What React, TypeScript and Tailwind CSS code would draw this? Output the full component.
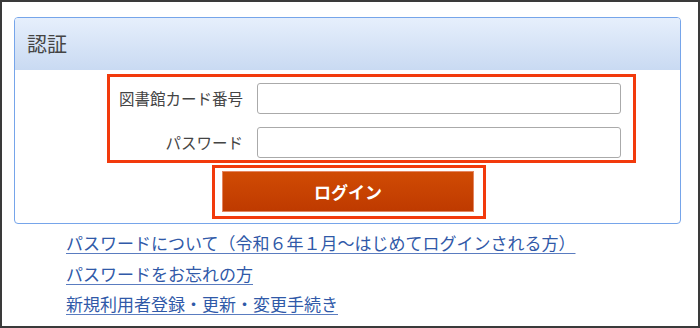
export default function App() {
  const links = [
    'パスワードについて（令和６年１月～はじめてログインされる方）',
    'パスワードをお忘れの方',
    '新規利用者登録・更新・変更手続き',
  ];

  return (
    <div
      className="w-[700px] h-[328px] border-2 border-[#3a3a3a] bg-white pt-[15px] pl-[12px] box-border overflow-hidden"
      style={{ fontFamily: '"Noto Sans CJK JP", "Noto Sans", sans-serif' }}
    >
      {/* Auth panel */}
      <section className="w-[667px] border border-[#76a5ea] rounded-[4px] overflow-hidden">
        <header className="h-[52px] flex items-center pl-[12px] bg-gradient-to-b from-[#e6effc] to-[#c9daf2]">
          <h1 className="text-[20px] text-[#444] leading-none">認証</h1>
        </header>

        <div className="pt-[4px] pb-[4px]">
          {/* Inputs */}
          <div className="ml-[92px] w-[529px] border-[3px] border-[#f23a0c] pt-[6px] pb-[2px] pl-[8px] pr-[12px]">
            <div className="grid grid-cols-[125px_364px] gap-x-[14px] gap-y-[13px] items-center">
              <label className="text-right text-[15.5px] text-[#444] whitespace-nowrap">図書館カード番号</label>
              <input className="h-[31px] border border-[#aaa] rounded-[3px] bg-white outline-none" />
              <label className="text-right text-[15.5px] text-[#444] whitespace-nowrap">パスワード</label>
              <input type="password" className="h-[31px] border border-[#aaa] rounded-[3px] bg-white outline-none" />
            </div>
          </div>

          {/* Login button */}
          <div className="mt-[2px] ml-[197px] w-[274px] border-[3px] border-[#f23a0c] pt-[3px] pb-[4px] pl-[7px] pr-[9px]">
            <button className="w-[252px] h-[41px] border border-[#e58660] bg-gradient-to-b from-[#d04b04] to-[#bf3a00] text-white font-bold text-[17px] flex items-center justify-center">
              ログイン
            </button>
          </div>
        </div>
      </section>

      {/* Links */}
      <ul className="mt-[4px] ml-[52px]">
        {links.map(l => (
          <li key={l} className="leading-[29.5px]">
            <a href="#" className="text-[17px] text-[#3059a8] underline underline-offset-[3px] decoration-[#5a7cc0] whitespace-nowrap">
              {l}
            </a>
          </li>
        ))}
      </ul>
    </div>
  );
}
